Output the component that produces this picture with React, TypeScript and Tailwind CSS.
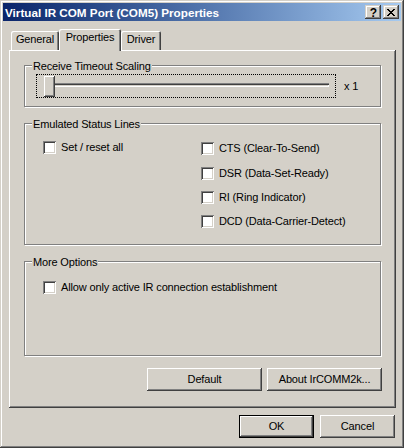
import React from "react";

const btnRaised =
  "shadow-[inset_-1px_-1px_#404040,inset_1px_1px_#ffffff,inset_-2px_-2px_#808080,inset_2px_2px_#d4d0c8]";

function Checkbox({ label }: { label: string }) {
  return (
    <div className="flex items-center h-[13px]">
      <div className="w-[13px] h-[13px] bg-white shrink-0 shadow-[inset_1px_1px_#808080,inset_-1px_-1px_#ffffff,inset_2px_2px_#404040,inset_-2px_-2px_#d4d0c8]" />
      <span className="ml-[5px] whitespace-nowrap">{label}</span>
    </div>
  );
}

function Group({
  label,
  className,
  children,
}: {
  label: string;
  className: string;
  children: React.ReactNode;
}) {
  return (
    <div
      className={
        "relative border border-[#808080] shadow-[inset_1px_1px_#ffffff,1px_1px_#ffffff] " +
        className
      }
    >
      <span className="absolute left-[7px] top-[-6px] bg-[#d4d0c8] px-[1px] whitespace-nowrap">
        {label}
      </span>
      {children}
    </div>
  );
}

function PushButton({
  label,
  className,
  isDefault,
}: {
  label: string;
  className: string;
  isDefault?: boolean;
}) {
  if (isDefault) {
    return (
      <div className={"border border-black bg-[#d4d0c8] flex " + className}>
        <div className={"flex-1 flex items-center justify-center " + btnRaised}>
          {label}
        </div>
      </div>
    );
  }
  return (
    <div
      className={
        "bg-[#d4d0c8] flex items-center justify-center " + btnRaised + " " + className
      }
    >
      {label}
    </div>
  );
}

export default function App() {
  return (
    <div className="w-[404px] h-[448px] bg-[#d4d0c8] p-[3px] flex flex-col text-[11px] leading-[13px] tracking-[-0.15px] text-black font-['Liberation_Sans',Arial,sans-serif] shadow-[inset_-1px_-1px_#404040,inset_1px_1px_#d4d0c8,inset_-2px_-2px_#808080,inset_2px_2px_#ffffff]">
      {/* Title bar */}
      <div className="h-[18px] flex items-center bg-linear-to-r from-[#0a246a] to-[#a6caf0] pr-[2px]">
        <span className="pl-[2px] pt-[1px] font-bold text-[11.7px] tracking-normal text-white whitespace-nowrap flex-1">
          Virtual IR COM Port (COM5) Properties
        </span>
        <div className="w-[16px] h-[14px] bg-[#d4d0c8] flex items-center justify-center shadow-[inset_-1px_-1px_#404040,inset_1px_1px_#d4d0c8,inset_-2px_-2px_#808080,inset_2px_2px_#ffffff]">
          <span className="font-bold text-[12px] leading-[12px] tracking-normal mt-[1px] ml-[1px]">?</span>
        </div>
        <div className="ml-[2px] w-[16px] h-[14px] bg-[#d4d0c8] flex items-center justify-center shadow-[inset_-1px_-1px_#404040,inset_1px_1px_#d4d0c8,inset_-2px_-2px_#808080,inset_2px_2px_#ffffff]">
          <svg width="8" height="7" viewBox="0 0 8 7" shapeRendering="crispEdges">
            <path
              d="M0 0h2v1H0z M6 0h2v1H6z M1 1h2v1H1z M5 1h2v1H5z M2 2h4v1H2z M3 3h2v1H3z M2 4h4v1H2z M1 5h2v1H1z M5 5h2v1H5z M0 6h2v1H0z M6 6h2v1H6z"
              fill="#000"
            />
          </svg>
        </div>
      </div>

      {/* Body */}
      <div className="pl-[6px] pr-[5px] flex flex-col">
        {/* Tabs */}
        <div className="mt-[8px] h-[21px] flex items-end pl-[2px]">
          <div className="w-[48px] h-[19px] pt-[2px] text-center rounded-tl-[2px] rounded-tr-[2px] shadow-[inset_1px_1px_#ffffff,inset_-1px_0_#404040,inset_-2px_0_#808080]">
            General
          </div>
          <div className="relative z-10 w-[62px] h-[22px] mb-[-1px] pt-[2px] text-center bg-[#d4d0c8] rounded-tl-[2px] rounded-tr-[2px] shadow-[inset_1px_1px_#ffffff,inset_-1px_0_#404040,inset_-2px_0_#808080]">
            Properties
          </div>
          <div className="w-[40px] h-[19px] pt-[2px] text-center rounded-tl-[2px] rounded-tr-[2px] shadow-[inset_1px_1px_#ffffff,inset_-1px_0_#404040,inset_-2px_0_#808080]">
            Driver
          </div>
        </div>

        {/* Panel */}
        <div className="h-[358px] pt-[15px] px-[15px] flex flex-col shadow-[inset_-1px_-1px_#404040,inset_1px_1px_#ffffff,inset_-2px_-2px_#808080]">
          <Group label="Receive Timeout Scaling" className="h-[42px] flex items-start pl-[11px] pt-[8px]">
            <div className="flex items-center">
              <div className="relative w-[300px] h-[24px] border border-dotted border-black">
                <div className="ml-[7px] mt-[8px] w-[285px] h-[4px] shadow-[inset_0_1px_#808080,inset_0_2px_#404040,inset_0_-1px_#ffffff,inset_-1px_0_#ffffff]" />
                <div className={"absolute left-[7px] top-[1px] w-[11px] h-[21px] bg-[#d4d0c8] " + btnRaised} />
              </div>
              <span className="ml-[8px]">x 1</span>
            </div>
          </Group>

          <Group label="Emulated Status Lines" className="mt-[16px] h-[122px] flex pl-[18px] pt-[17px]">
            <div className="w-[158px]">
              <Checkbox label="Set / reset all" />
            </div>
            <div className="flex flex-col pt-[1px]">
              <Checkbox label="CTS (Clear-To-Send)" />
              <div className="mt-[12px]">
                <Checkbox label="DSR (Data-Set-Ready)" />
              </div>
              <div className="mt-[11px]">
                <Checkbox label="RI (Ring Indicator)" />
              </div>
              <div className="mt-[11px]">
                <Checkbox label="DCD (Data-Carrier-Detect)" />
              </div>
            </div>
          </Group>

          <Group label="More Options" className="mt-[16px] h-[95px] pl-[18px] pt-[19px]">
            <Checkbox label="Allow only active IR connection establishment" />
          </Group>

          <div className="mt-[12px] flex justify-end gap-[5px] mr-[-1px]">
            <PushButton label="Default" className="w-[115px] h-[23px]" />
            <PushButton label="About IrCOMM2k..." className="w-[115px] h-[23px]" />
          </div>
        </div>

        {/* Dialog buttons */}
        <div className="mt-[7px] flex justify-end gap-[6px] mr-[1px]">
          <PushButton label="OK" className="w-[75px] h-[23px]" isDefault />
          <PushButton label="Cancel" className="w-[75px] h-[23px]" />
        </div>
      </div>
    </div>
  );
}
